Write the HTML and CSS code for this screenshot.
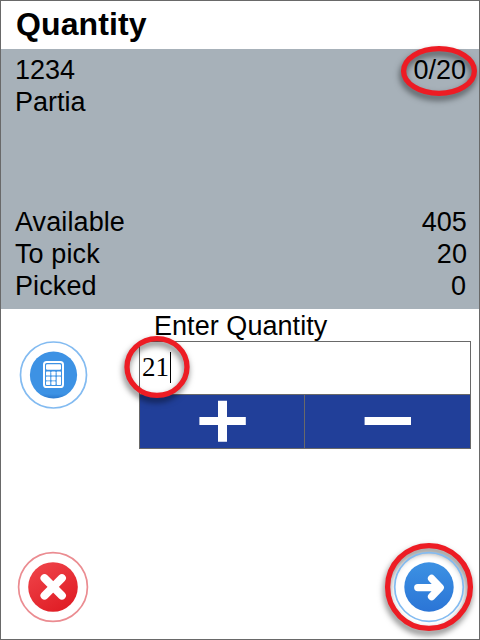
FILE: index.html
```html
<!DOCTYPE html>
<html lang="en">
<head>
<meta charset="utf-8">
<title>Quantity</title>
<link rel="stylesheet" href="styles.css">
</head>
<body>
<main class="screen">
  <h1 class="title">Quantity</h1>
  <section class="details">
    <div class="row"><span>1234</span>
      <span class="count">0/20
        <svg class="mark mark-count" width="92" height="68" viewBox="0 0 92 68"><ellipse cx="46" cy="34" rx="35.4" ry="22.4"/></svg>
      </span>
    </div>
    <div class="row"><span>Partia</span></div>
    <div class="stats">
      <div class="row"><span>Available</span><span>405</span></div>
      <div class="row"><span>To pick</span><span>20</span></div>
      <div class="row"><span>Picked</span><span class="picked">0</span></div>
    </div>
  </section>
  <section class="entry">
    <svg class="calc" width="70" height="70" viewBox="0 0 70 70">
      <defs><linearGradient id="sky" x1="0" y1="0" x2="0" y2="1"><stop offset="0" stop-color="#3d92e4"/><stop offset=".9" stop-color="#3d92e4"/><stop offset="1" stop-color="#2b78cc"/></linearGradient></defs>
      <circle cx="35.5" cy="35" r="33" fill="#fff" stroke="#83bbf1" stroke-width="1.7"/>
      <circle cx="35.5" cy="35" r="23.6" fill="url(#sky)"/>
      <rect x="26" y="22" width="19" height="25" rx="2.6" fill="none" stroke="#fff" stroke-width="2"/>
      <rect x="28" y="24.2" width="15" height="5.6" rx="1.2" fill="#fff"/>
      <g fill="#fff">
        <rect x="28" y="31.6" width="4.3" height="4" rx=".7"/><rect x="33.3" y="31.6" width="4.3" height="4" rx=".7"/><rect x="38.7" y="31.6" width="4.3" height="4" rx=".7"/>
        <rect x="28" y="36.4" width="4.3" height="4" rx=".7"/><rect x="33.3" y="36.4" width="4.3" height="4" rx=".7"/><rect x="38.7" y="36.4" width="4.3" height="8.6" rx=".7"/>
        <rect x="28" y="41.2" width="4.3" height="3.8" rx=".7"/><rect x="33.3" y="41.2" width="4.3" height="3.8" rx=".7"/>
      </g>
    </svg>
    <div class="form">
      <div class="label">Enter Quantity</div>
      <div class="control">
        <div class="field"><span>21</span><i class="caret"></i>
          <svg class="mark mark-field" width="84" height="80" viewBox="0 0 84 80"><ellipse cx="42" cy="40" rx="30" ry="28.4"/></svg>
        </div>
        <div class="buttons">
          <div class="button"><svg width="48" height="42" viewBox="0 0 48 42"><path d="M1.4 17h46.4v8H1.4zM20 .7h9v41h-9z" fill="#fff"/></svg></div>
          <div class="button"><svg width="48" height="42" viewBox="0 0 48 42"><path d="M.6 17h46.4v8H.6z" fill="#fff"/></svg></div>
        </div>
      </div>
    </div>
  </section>
  <footer class="actions">
    <svg width="72" height="72" viewBox="0 0 72 72">
      <defs><linearGradient id="red" x1=".2" y1="0" x2=".8" y2="1"><stop offset="0" stop-color="#ef4349"/><stop offset="1" stop-color="#df1b23"/></linearGradient></defs>
      <circle cx="36" cy="36" r="34.4" fill="#fff" stroke="#eb8c91" stroke-width="1.7"/>
      <circle cx="36" cy="36" r="24.8" fill="url(#red)"/>
      <path d="M27.5 27.2 44.9 44.6M44.9 27.2 27.5 44.6" stroke="#fff" stroke-width="8" stroke-linecap="round"/>
    </svg>
    <div class="next">
      <svg class="mark mark-next" width="102" height="106" viewBox="0 0 102 106"><circle cx="51" cy="51" r="41.4"/></svg>
      <svg class="next-icon" width="72" height="72" viewBox="0 0 72 72">
        <defs><linearGradient id="blue" x1="0" y1="0" x2="0" y2="1"><stop offset="0" stop-color="#3c91e3"/><stop offset="1" stop-color="#2b75d6"/></linearGradient></defs>
        <circle cx="36" cy="36" r="34.3" fill="none" stroke="#83bbf1" stroke-width="1.7"/>
        <circle cx="36" cy="36" r="24.7" fill="url(#blue)"/>
        <path d="M24.8 36.6H45M38.6 27.5 47.2 36.6 38.6 45.6" fill="none" stroke="#fff" stroke-width="7.4" stroke-linecap="round" stroke-linejoin="round"/>
      </svg>
    </div>
  </footer>
</main>
</body>
</html>
```
FILE: styles.css
```css
* { box-sizing: border-box; }
body { margin: 0; background: #fff; }
.screen {
  width: 480px;
  height: 640px;
  border: 1px solid #696969;
  display: flex;
  flex-direction: column;
  overflow: hidden;
  font: 27px/32px "Liberation Sans", Arial, sans-serif;
  color: #000;
}
.title {
  margin: 0;
  height: 48px;
  padding: 5px 0 0 15px;
  font-size: 32px;
  line-height: 36px;
  font-weight: bold;
  letter-spacing: .1px;
}
.details {
  height: 260px;
  padding: 5px 12px 7px 14px;
  background: #a7b1b9;
  display: flex;
  flex-direction: column;
}
.row { display: flex; justify-content: space-between; }
.stats { margin-top: auto; letter-spacing: .1px; }
.count, .field, .next { position: relative; }
.count, .picked { margin-right: 1px; }
.mark {
  position: absolute;
  overflow: visible;
  fill: none;
  stroke: #ed1c24;
  stroke-width: 5.3;
  filter: drop-shadow(-1px 4px 3px rgba(0, 0, 0, .55));
}
.mark-count { left: -20px; top: -17px; }
.mark-field { left: -25px; top: -15px; }
.mark-next { left: -15px; top: -15px; }
.entry { display: flex; padding: 1px 8px 0 17px; height: 142px; }
.calc { margin: 30px 51px 0 0; flex: none; }
.form { flex: 1; }
.label { padding-left: 15px; height: 31px; letter-spacing: .05px; }
.control { border: 1px solid #696969; height: 108px; }
.field {
  height: 52px;
  padding: 0 0 2px 2px;
  display: flex;
  align-items: center;
  font: 27px/32px "Liberation Serif", "Times New Roman", serif;
}
.caret { width: 1px; height: 31px; margin-left: 1px; background: #000; }
.buttons {
  display: grid;
  grid-template-columns: 164px 1fr;
  height: 54px;
  border-top: 1px solid #696969;
}
.button {
  display: flex;
  align-items: center;
  justify-content: center;
  padding-bottom: 1px;
  background: #213f99;
}
.button + .button { border-left: 1px solid #696969; }
.actions {
  margin-top: auto;
  padding: 0 14px 16px 16px;
  display: flex;
  justify-content: space-between;
}
.actions svg { flex: none; }
.next { width: 72px; height: 72px; }
.next-icon { position: relative; display: block; }
```
